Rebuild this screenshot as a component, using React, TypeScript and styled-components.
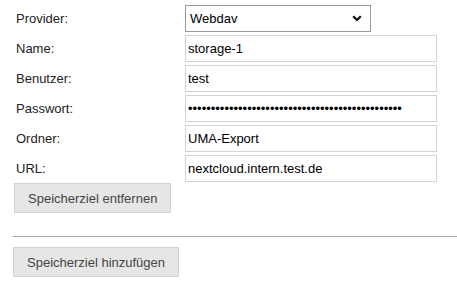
import React from 'react';
import styled, { createGlobalStyle } from 'styled-components';

const GlobalStyle = createGlobalStyle`
  html, body {
    margin: 0;
    padding: 0;
    background: #ffffff;
  }
  body {
    font-family: 'Liberation Sans', Arial, sans-serif;
    font-size: 13px;
    color: #222222;
  }
`;

const fields = [
  { label: 'Name:', value: 'storage-1', type: 'text' },
  { label: 'Benutzer:', value: 'test', type: 'text' },
  { label: 'Passwort:', value: 'x'.repeat(47), type: 'password' },
  { label: 'Ordner:', value: 'UMA-Export', type: 'text' },
  { label: 'URL:', value: 'nextcloud.intern.test.de', type: 'text' },
];

const App = () => {
  return (
    <>
      <GlobalStyle />
      <Page>
        <StorageBlock>
          <FormGrid>
            <Label>Provider:</Label>
            <SelectWrap>
              <Select defaultValue="webdav">
                <option value="webdav">Webdav</option>
                <option value="s3">S3</option>
                <option value="ftp">FTP</option>
              </Select>
              <Chevron width="10" height="7" viewBox="0 0 10 7">
                <path d="M1.2 1.2 L5 5 L8.8 1.2" fill="none" stroke="#111" strokeWidth="2.2" />
              </Chevron>
            </SelectWrap>
            {fields.map((f) => (
              <React.Fragment key={f.label}>
                <Label>{f.label}</Label>
                <TextInput type={f.type} defaultValue={f.value} />
              </React.Fragment>
            ))}
          </FormGrid>
          <GrayButton type="button">Speicherziel entfernen</GrayButton>
        </StorageBlock>
        <Divider />
        <GrayButton type="button">Speicherziel hinzufügen</GrayButton>
      </Page>
    </>
  );
};

export default App;

const Page = styled.div`
  padding: 5px 0 0 13px;
  display: flex;
  flex-direction: column;
  align-items: flex-start;
`;

const StorageBlock = styled.div`
  padding-left: 1px;
  display: flex;
  flex-direction: column;
  align-items: flex-start;
  gap: 1px;
`;

const FormGrid = styled.div`
  display: grid;
  grid-template-columns: 171px 252px;
  row-gap: 3px;
  align-items: center;
`;

const Label = styled.div`
  padding-left: 2px;
  color: #222222;
  line-height: 15px;
`;

const SelectWrap = styled.div`
  position: relative;
  width: 186px;
  height: 27px;
`;

const Select = styled.select`
  appearance: none;
  -webkit-appearance: none;
  width: 100%;
  height: 100%;
  box-sizing: border-box;
  margin: 0;
  padding: 0 0 0 4px;
  border: 1px solid #9a9a9a;
  border-radius: 0;
  background: #ffffff;
  font-family: 'Liberation Sans', Arial, sans-serif;
  font-size: 13px;
  color: #000000;
  outline: none;
`;

const Chevron = styled.svg`
  position: absolute;
  right: 9px;
  top: 10px;
  pointer-events: none;
`;

const TextInput = styled.input`
  width: 100%;
  height: 27px;
  box-sizing: border-box;
  margin: 0;
  padding: 0 2px;
  border: 1px solid #d3d3d3;
  border-radius: 0;
  background: #ffffff;
  font-family: 'Liberation Sans', Arial, sans-serif;
  font-size: 13px;
  color: #000000;
  outline: none;
`;

const GrayButton = styled.button`
  height: 30px;
  margin: 0;
  padding: 0 13px;
  box-sizing: border-box;
  border: 1px solid #d2d2d2;
  border-radius: 0;
  background: #e6e6e6;
  font-family: 'Liberation Sans', Arial, sans-serif;
  font-size: 13px;
  color: #444444;
  cursor: pointer;
`;

const Divider = styled.hr`
  align-self: stretch;
  margin: 23px 0 10px;
  border: 0;
  border-top: 1px solid #aaaaaa;
  height: 0;
`;
